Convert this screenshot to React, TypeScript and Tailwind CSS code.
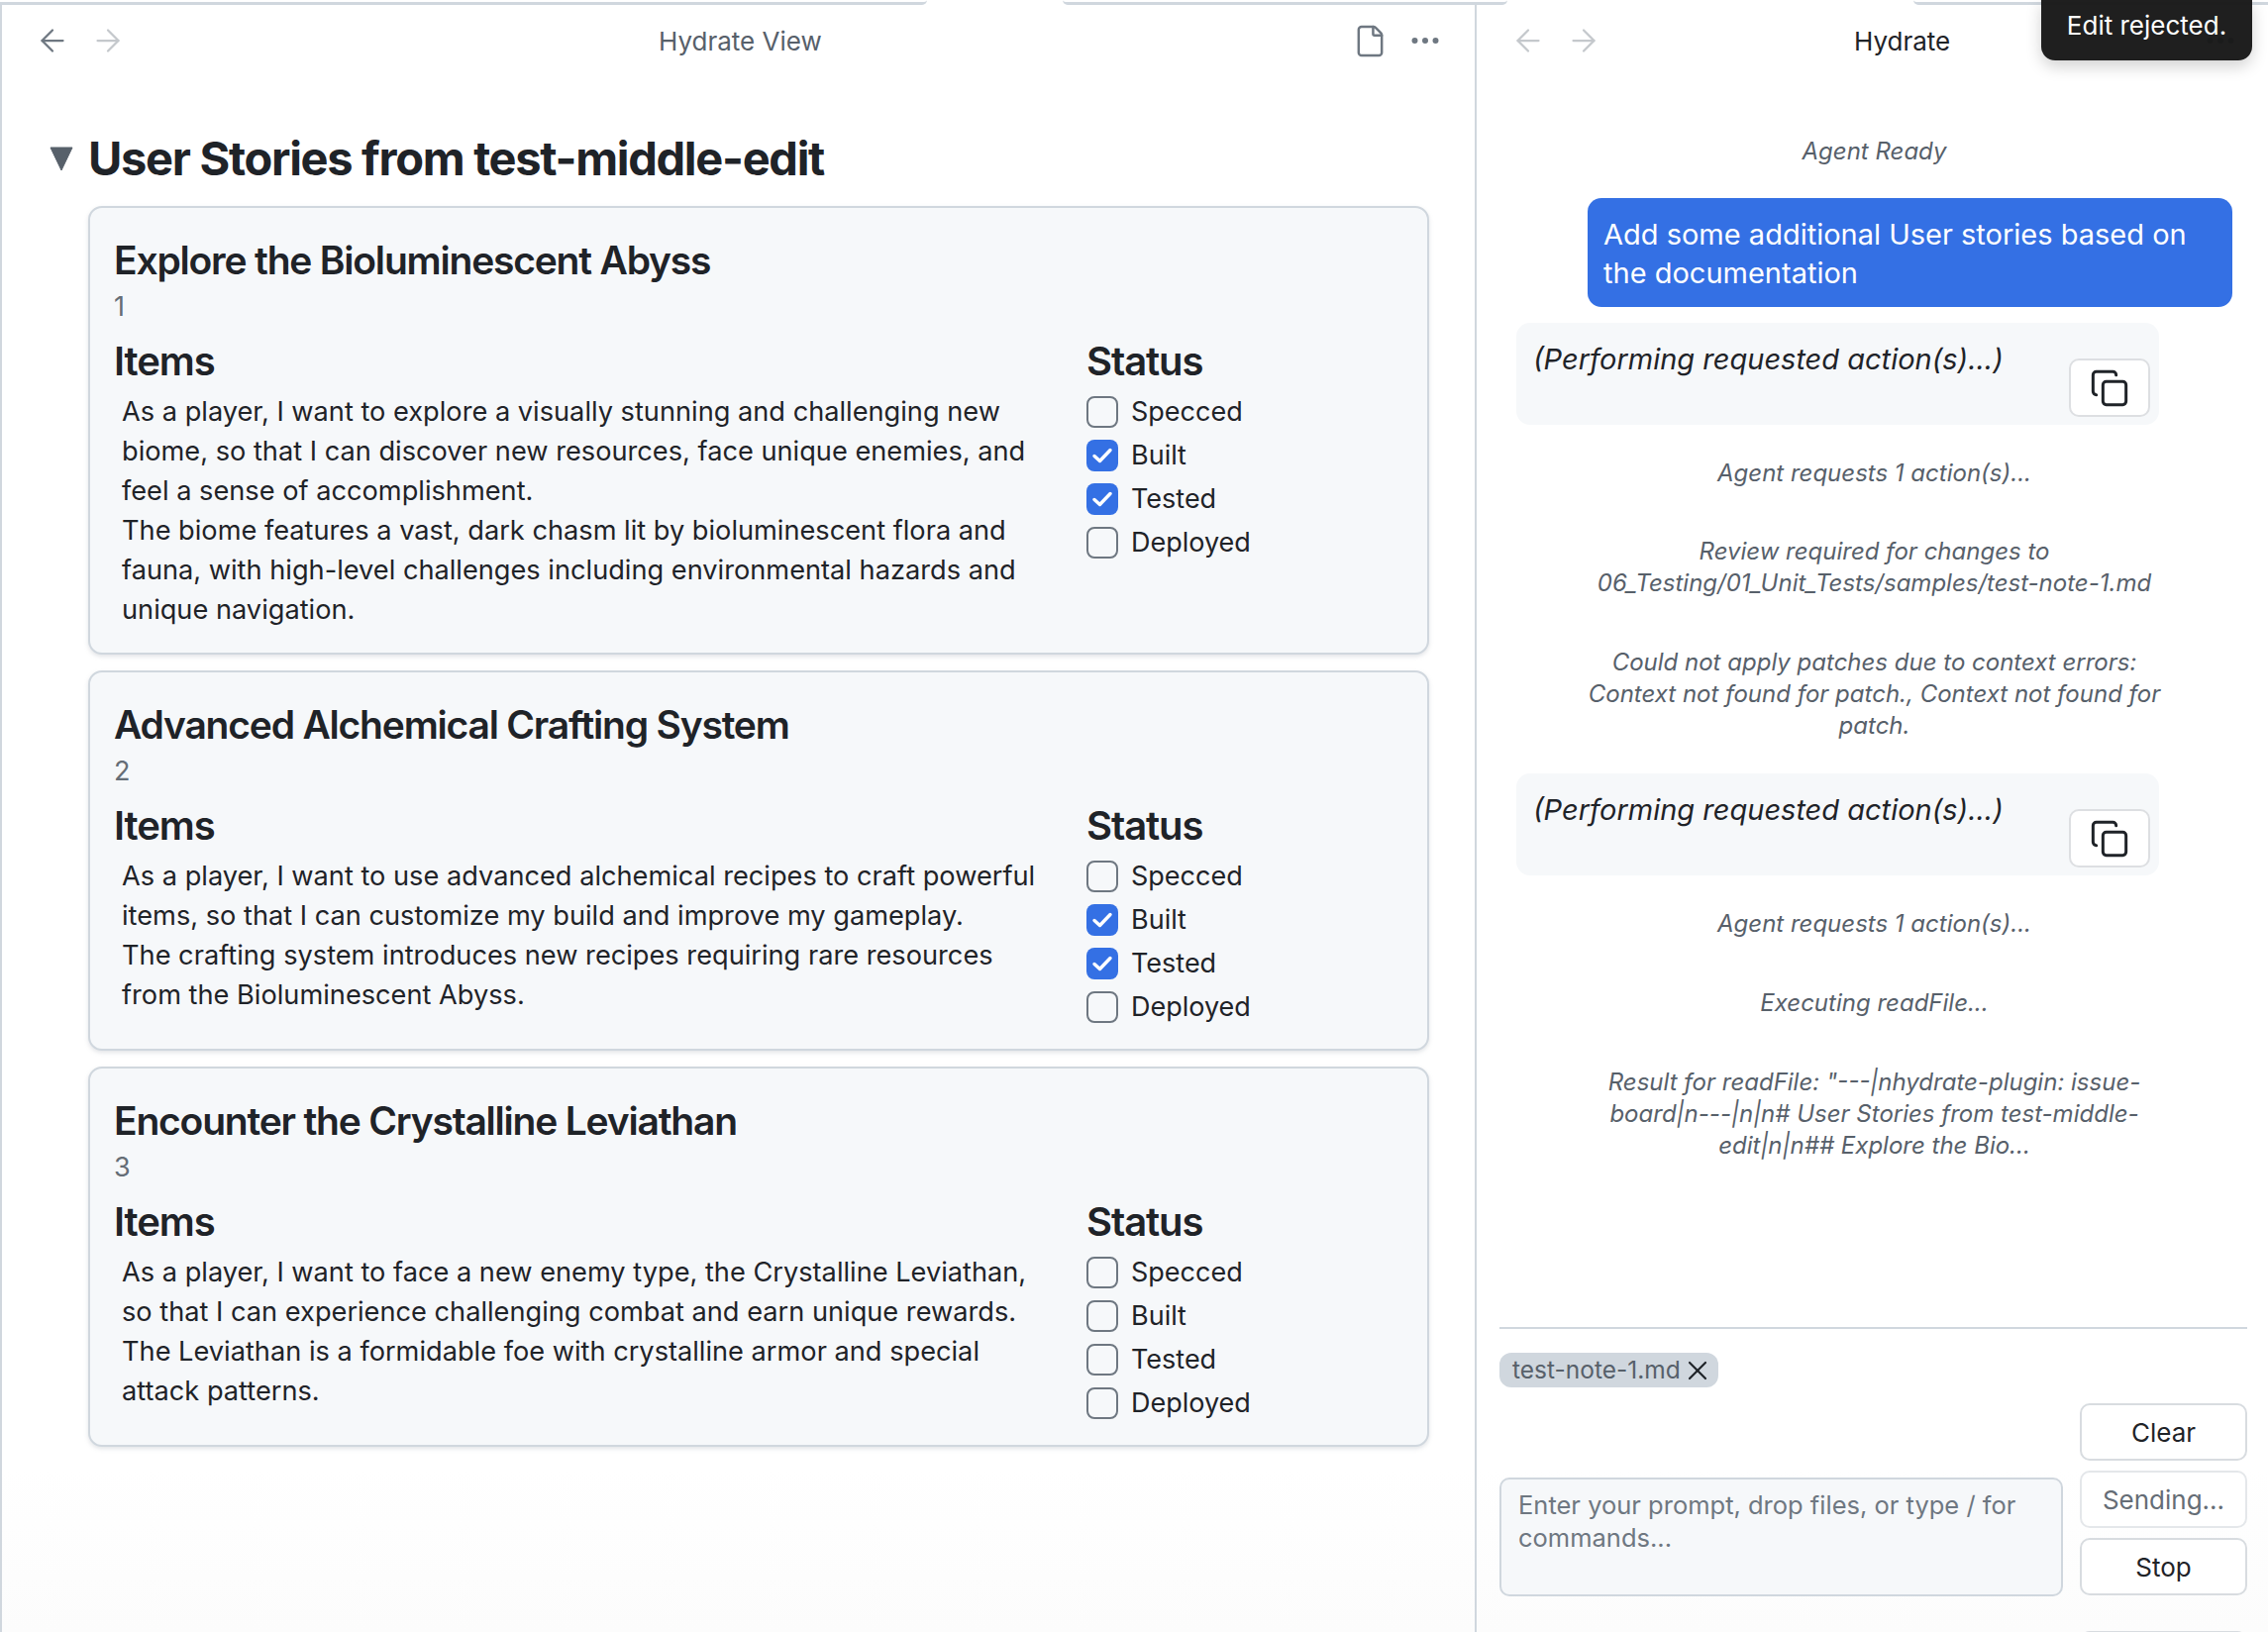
import React from 'react';
import { ArrowLeft, ArrowRight, Copy, Ellipsis, File, X } from 'lucide-react';

const stories = [
  {
    title: 'Explore the Bioluminescent Abyss',
    id: '1',
    lines: [
      'As a player, I want to explore a visually stunning and challenging new biome, so that I can discover new resources, face unique enemies, and feel a sense of accomplishment.',
      'The biome features a vast, dark chasm lit by bioluminescent flora and fauna, with high-level challenges including environmental hazards and unique navigation.',
    ],
    checked: [false, true, true, false],
    height: 'h-[453px]',
  },
  {
    title: 'Advanced Alchemical Crafting System',
    id: '2',
    lines: [
      'As a player, I want to use advanced alchemical recipes to craft powerful items, so that I can customize my build and improve my gameplay.',
      'The crafting system introduces new recipes requiring rare resources from the Bioluminescent Abyss.',
    ],
    checked: [false, true, true, false],
    height: 'h-[384px]',
  },
  {
    title: 'Encounter the Crystalline Leviathan',
    id: '3',
    lines: [
      'As a player, I want to face a new enemy type, the Crystalline Leviathan, so that I can experience challenging combat and earn unique rewards.',
      'The Leviathan is a formidable foe with crystalline armor and special attack patterns.',
    ],
    checked: [false, false, false, false],
    height: 'h-[384px]',
  },
];

const statuses = ['Specced', 'Built', 'Tested', 'Deployed'];

const Checkbox: React.FC<{ checked: boolean }> = ({ checked }) =>
  checked ? (
    <span className="flex h-[32px] w-[32px] shrink-0 items-center justify-center rounded-[8px] bg-[#3470e4]">
      <svg width="22" height="18" viewBox="0 0 22 18" fill="none">
        <path d="M3 9.5l5.5 5L19 3.5" stroke="white" strokeWidth="3.4" strokeLinecap="round" strokeLinejoin="round" />
      </svg>
    </span>
  ) : (
    <span className="h-[32px] w-[32px] shrink-0 rounded-[8px] border-[2px] border-[#6e7781]" />
  );

const StoryCard: React.FC<{ story: (typeof stories)[number] }> = ({ story }) => (
  <div className={`${story.height} rounded-[14px] border-[2.5px] border-[#d0d7de] bg-[#f6f8fa] pl-[24px] pr-[24px] pt-[31px] shadow-[0_2px_4px_rgba(140,149,159,0.25)]`}>
    <h3 className="h-[44px] text-[39px] leading-[44px] font-semibold tracking-[-1.2px] text-[#1f2328]">{story.title}</h3>
    <div className="mt-[5px] h-[40px] text-[27px] leading-[40px] text-[#656d76]">{story.id}</div>
    <div className="mt-[13px] flex">
      <div className="w-[982px]">
        <h4 className="h-[44px] text-[40px] leading-[44px] font-semibold tracking-[-1.1px] text-[#1f2328]">Items</h4>
        <div className="mt-[9px] pl-[8px] text-[27.2px] leading-[40px] text-[#1f2328]">
          {story.lines.map((line) => (
            <div key={line} className="w-[935px]">{line}</div>
          ))}
        </div>
      </div>
      <div>
        <h4 className="h-[44px] text-[40px] leading-[44px] font-semibold tracking-[-1.1px] text-[#1f2328]">Status</h4>
        <div className="mt-[13px] flex flex-col gap-[12px]">
          {statuses.map((label, i) => (
            <div key={label} className="flex h-[32px] items-center gap-[13px] text-[27px] leading-[32px] text-[#1f2328]">
              <Checkbox checked={story.checked[i]} />
              {label}
            </div>
          ))}
        </div>
      </div>
    </div>
  </div>
);

const AgentBubble: React.FC = () => (
  <div className="flex h-[103px] w-[649px] items-start justify-between rounded-[14px] bg-[#f6f8fa] pl-[17px] pr-[9px] pt-[17px]">
    <span className="text-[29px] leading-[40px] italic text-[#1f2328]">(Performing requested action(s)...)</span>
    <button className="mt-[19px] flex h-[59px] w-[82px] items-center justify-center rounded-[10px] border-[2px] border-[#dddfe2] bg-white text-[#1f2328]">
      <Copy size={40} strokeWidth={1.8} />
    </button>
  </div>
);

const Note: React.FC<{ children: React.ReactNode; className?: string }> = ({ children, className }) => (
  <div className={`w-[590px] self-center text-center text-[24px] leading-[32px] italic text-[#57606a] ${className ?? ''}`}>{children}</div>
);

const SideButton: React.FC<{ label: string; muted?: boolean }> = ({ label, muted }) => (
  <button className={`flex h-[58px] w-[169px] items-center justify-center rounded-[10px] border-[2px] bg-white text-[26px] ${muted ? 'border-[#e4e7ea] text-[#656d76]' : 'border-[#d8dce0] text-[#1f2328]'}`}>
    {label}
  </button>
);

const App: React.FC = () => {
  return (
    <div className="flex h-[1648px] w-[2290px] flex-col overflow-hidden bg-white font-['Inter',sans-serif]">
      {/* tab strip edge */}
      <div className="flex h-[5px] shrink-0">
        <div className="w-[936px] rounded-br-[10px] border-b-[3px] border-[#d0d7de]" />
        <div className="ml-[137px] w-[449px] rounded-b-[10px] border-b-[3px] border-[#d0d7de]" />
        <div className="ml-[410px] flex-1 rounded-bl-[10px] border-b-[3px] border-[#d0d7de]" />
      </div>

      <div className="flex min-h-0 flex-1 bg-gradient-to-b from-white from-90% to-[#fcfcfc]">
        {/* left pane */}
        <div className="w-[1491px] shrink-0 border-l-[2px] border-r-[2px] border-[#d0d7de]">
          <div className="flex h-[72px] items-center pl-[33px] pr-[32px]">
            <ArrowLeft size={36} strokeWidth={1.5} className="text-[#6e7781]" />
            <ArrowRight size={36} strokeWidth={1.5} className="ml-[20px] text-[#c4c8cc]" />
            <div className="flex-1 pl-[538px] text-[26px] text-[#57606a]">Hydrate View</div>
            <File size={35} strokeWidth={1.7} className="text-[#6e7781]" />
            <Ellipsis size={36} strokeWidth={2} className="ml-[20px] text-[#6e7781]" />
          </div>
          <div className="mt-[53px] flex h-[60px] items-center pl-[48px]">
            <svg width="24" height="24" viewBox="0 0 24 24" className="shrink-0">
              <path d="M1 1h22L12 24z" fill="#57606a" stroke="#57606a" strokeWidth="1" strokeLinejoin="round" />
            </svg>
            <h1 className="ml-[15px] text-[47px] font-bold tracking-[-1.3px] text-[#1f2328]">User Stories from test-middle-edit</h1>
          </div>
          <div className="ml-[87px] mt-[18px] flex w-[1354px] flex-col gap-[16px]">
            {stories.map((story) => (
              <StoryCard key={story.id} story={story} />
            ))}
          </div>
        </div>

        {/* right pane */}
        <div className="relative min-w-0 flex-1">
          <div className="flex h-[72px] items-center pl-[34px] pr-[30px]">
            <ArrowLeft size={36} strokeWidth={1.5} className="text-[#c4c8cc]" />
            <ArrowRight size={36} strokeWidth={1.5} className="ml-[20px] text-[#c4c8cc]" />
            <div className="flex-1 pl-[255px] text-[26px] text-[#1f2328]">Hydrate</div>
            <Ellipsis size={36} strokeWidth={2} className="text-[#6e7781]" />
          </div>
          <div className="flex h-[1263px] flex-col pl-[40px] pr-[36px]">
            <Note className="mt-[60px]">Agent Ready</Note>
            <div className="mt-[31px] h-[110px] w-[651px] self-end rounded-[14px] bg-[#3470e4] px-[16px] pt-[17px] text-[29px] leading-[39px] text-white">
              Add some additional User stories based on the documentation
            </div>
            <div className="mt-[16px]"><AgentBubble /></div>
            <Note className="mt-[33px]">Agent requests 1 action(s)...</Note>
            <Note className="mt-[47px]">
              Review required for changes to 06_Testing/01_Unit_Tests/samples/test-note-1.md
            </Note>
            <Note className="mt-[48px]">
              Could not apply patches due to context errors: Context not found for patch., Context not found for patch.
            </Note>
            <div className="mt-[32px]"><AgentBubble /></div>
            <Note className="mt-[33px]">Agent requests 1 action(s)...</Note>
            <Note className="mt-[48px]">Executing readFile...</Note>
            <Note className="mt-[48px]">
              Result for readFile: "---|nhydrate-plugin: issue-board|n---|n|n# User Stories from test-middle-edit|n|n## Explore the Bio...
            </Note>
          </div>
          <div className="ml-[23px] mr-[21px] border-t-[2px] border-[#d0d7de] pt-[24px]">
            <div className="flex h-[35px] w-[221px] items-center rounded-[12px] bg-[#d0d7de] pl-[13px] text-[24.5px] text-[#57606a]">
              test-note-1.md
              <X size={32} strokeWidth={1.6} className="ml-[1px] shrink-0 text-[#1f2328]" />
            </div>
            <div className="mt-[16px] flex items-end justify-between">
              <div className="h-[120px] w-[569px] rounded-[10px] border-[2.5px] border-[#d0d7de] bg-[#f6f8fa] px-[17px] pt-[9px] text-[25.5px] leading-[33px] text-[#6e7781]">
                Enter your prompt, drop files, or type / for commands...
              </div>
              <div className="mb-[1px] flex flex-col gap-[10px]">
                <SideButton label="Clear" />
                <SideButton label="Sending..." muted />
                <SideButton label="Stop" />
              </div>
            </div>
            <div className="ml-auto mt-[35px] h-[10px] w-[169px] rounded-t-[10px] border-[2px] border-[#d8dce0]" />
          </div>

          {/* toast */}
          <div className="absolute right-[16px] top-[-5px] flex h-[61px] w-[213px] items-center justify-center rounded-b-[14px] bg-[#181818]/97 pb-[10px] text-[26px] text-white shadow-[0_6px_16px_rgba(0,0,0,0.18)]">
            Edit rejected.
          </div>
        </div>
      </div>
    </div>
  );
};

export default App;
